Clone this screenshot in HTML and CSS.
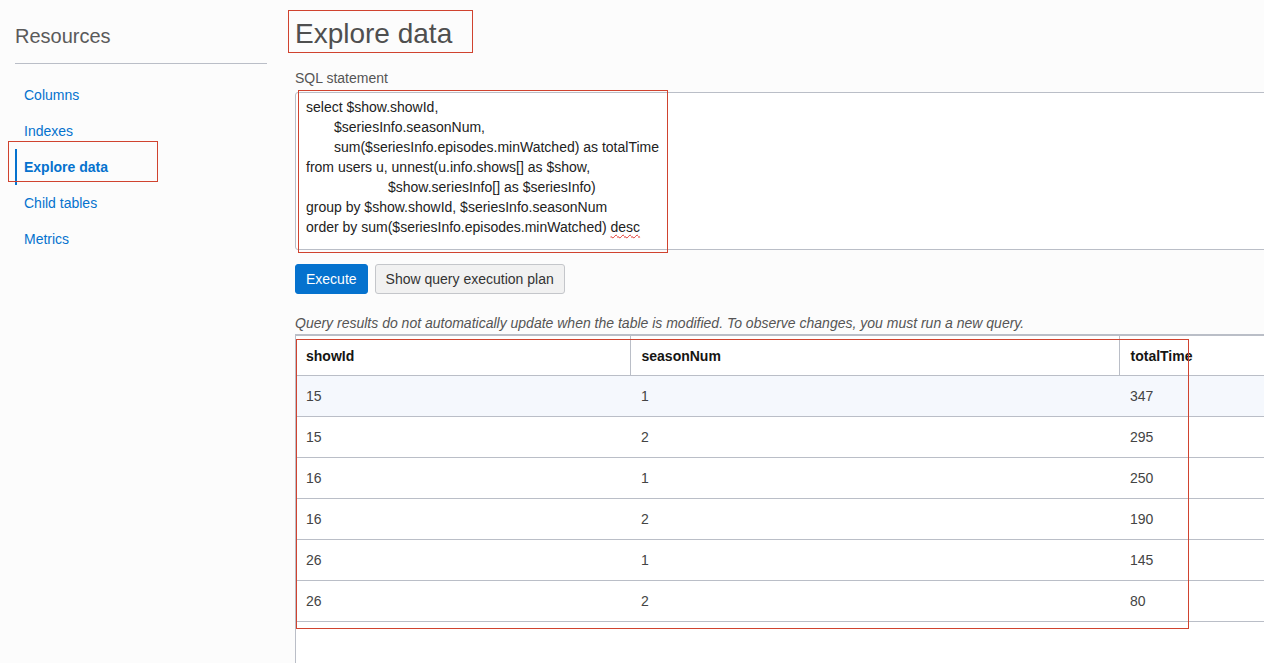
FILE: index.html
```html
<!DOCTYPE html>
<html lang="en">
<head>
<meta charset="utf-8">
<title>Explore data</title>
<link rel="stylesheet" href="styles.css">
</head>
<body>
<div class="page">
  <aside class="sidebar">
    <h2 class="side-title">Resources</h2>
    <hr class="side-rule">
    <nav class="side-nav">
      <a class="nav-item" href="#">Columns</a>
      <a class="nav-item" href="#">Indexes</a>
      <a class="nav-item active" href="#">Explore data</a>
      <a class="nav-item" href="#">Child tables</a>
      <a class="nav-item" href="#">Metrics</a>
    </nav>
  </aside>
  <main class="main">
    <h1 class="title">Explore data</h1>
    <div class="label">SQL statement</div>
    <div class="sql">
      <div class="sql-line">select $show.showId,</div>
      <div class="sql-line i1">$seriesInfo.seasonNum,</div>
      <div class="sql-line i1">sum($seriesInfo.episodes.minWatched) as totalTime</div>
      <div class="sql-line">from users u, unnest(u.info.shows[] as $show,</div>
      <div class="sql-line i2">$show.seriesInfo[] as $seriesInfo)</div>
      <div class="sql-line">group by $show.showId, $seriesInfo.seasonNum</div>
      <div class="sql-line">order by sum($seriesInfo.episodes.minWatched) <span class="spell">desc</span></div>
    </div>
    <div class="actions">
      <button class="btn btn-primary" type="button">Execute</button>
      <button class="btn btn-secondary" type="button">Show query execution plan</button>
    </div>
    <p class="note">Query results do not automatically update when the table is modified. To observe changes, you must run a new query.</p>
    <div class="table-wrap">
      <table class="results">
        <colgroup>
          <col class="c1"><col class="c2"><col class="c3">
        </colgroup>
        <thead>
          <tr><th>showId</th><th>seasonNum</th><th class="last">totalTime</th></tr>
        </thead>
        <tbody>
          <tr class="hover"><td>15</td><td>1</td><td>347</td></tr>
          <tr><td>15</td><td>2</td><td>295</td></tr>
          <tr><td>16</td><td>1</td><td>250</td></tr>
          <tr><td>16</td><td>2</td><td>190</td></tr>
          <tr><td>26</td><td>1</td><td>145</td></tr>
          <tr><td>26</td><td>2</td><td>80</td></tr>
        </tbody>
      </table>
    </div>
  </main>
</div>
<div class="mark mark-nav"></div>
<div class="mark mark-title"></div>
<div class="mark mark-sql"></div>
<div class="mark mark-table"></div>
</body>
</html>
```
FILE: styles.css
```css
html, body {
  margin: 0;
  padding: 0;
  height: 100%;
  overflow: hidden;
}
body {
  position: relative;
  background: #fcfcfc;
  font-family: "Liberation Sans", Arial, sans-serif;
  font-size: 14px;
  color: #333;
}
.page {
  display: flex;
  height: 663px;
}
.sidebar {
  flex: 0 0 252px;
  padding: 0 15px;
}
.side-title {
  margin: 24px 0 0;
  font-size: 20px;
  line-height: 24px;
  font-weight: normal;
  color: #5a5a5a;
}
.side-rule {
  margin: 15px 0 0;
  border: 0;
  height: 1px;
  background: #babec7;
}
.side-nav {
  display: flex;
  flex-direction: column;
  padding-top: 13px;
}
.nav-item {
  display: block;
  height: 36px;
  line-height: 36px;
  padding-left: 9px;
  color: #0572ce;
  text-decoration: none;
  font-size: 14px;
}
.nav-item.active {
  font-weight: bold;
  border-left: 2px solid #0572ce;
  padding-left: 7px;
}
.main {
  flex: 1;
  min-width: 0;
  padding-left: 13px;
  display: flex;
  flex-direction: column;
  overflow: hidden;
}
.title {
  margin: 18px 0 0;
  font-size: 28px;
  line-height: 32px;
  font-weight: normal;
  color: #4f4f4f;
}
.label {
  margin-top: 20px;
  line-height: 16px;
  color: #555;
}
.sql {
  margin-top: 6px;
  width: 1000px;
  height: 158px;
  box-sizing: border-box;
  border: 1px solid #babec7;
  border-radius: 3px;
  background: #fff;
  padding: 4px 10px 0;
  color: #222;
  flex-shrink: 0;
}
.sql-line {
  line-height: 20px;
  white-space: nowrap;
}
.i1 { padding-left: 28px; }
.i2 { padding-left: 82px; }
.spell {
  text-decoration: underline wavy #e0342a;
  text-decoration-thickness: 1px;
  text-underline-offset: 2px;
}
.actions {
  display: flex;
  gap: 7px;
  margin-top: 14px;
}
.btn {
  height: 30px;
  box-sizing: border-box;
  font-family: inherit;
  font-size: 14px;
  border-radius: 3px;
  padding: 0 10px;
  cursor: pointer;
}
.btn-primary {
  background: #0572ce;
  border: 1px solid #0572ce;
  color: #fff;
}
.btn-secondary {
  background: #f1f1f1;
  border: 1px solid #c4c6ca;
  color: #333;
}
.note {
  margin: 21px 0 0;
  line-height: 16px;
  font-style: italic;
  color: #555;
  white-space: nowrap;
}
.table-wrap {
  margin-top: 3px;
  flex: 1;
  width: 1000px;
  border-top: 2px solid #babec7;
  border-left: 1px solid #babec7;
  background: #fff;
}
.results {
  border-collapse: collapse;
  table-layout: fixed;
  width: 1000px;
}
.c1 { width: 334px; }
.c2 { width: 489px; }
.c3 { width: 177px; }
.results th {
  height: 39px;
  padding: 0 10px;
  text-align: left;
  font-weight: bold;
  color: #161513;
  border-right: 1px solid #babec7;
  border-bottom: 1px solid #babec7;
}
.results th + th,
.results td + td {
  padding-left: 11px;
}
.results th.last { border-right: 0; }
.results td {
  height: 40px;
  padding: 0 10px;
  color: #444;
  border-bottom: 1px solid #babec7;
}
.results tr.hover td { background: #f5f8fd; }
.mark {
  position: absolute;
  border: 1px solid #d0432f;
  box-sizing: border-box;
  pointer-events: none;
}
.mark-nav { left: 8px; top: 141px; width: 150px; height: 41px; }
.mark-title { left: 288px; top: 10px; width: 185px; height: 43px; }
.mark-sql { left: 298px; top: 90px; width: 370px; height: 163px; }
.mark-table { left: 296px; top: 339px; width: 893px; height: 290px; }
```
